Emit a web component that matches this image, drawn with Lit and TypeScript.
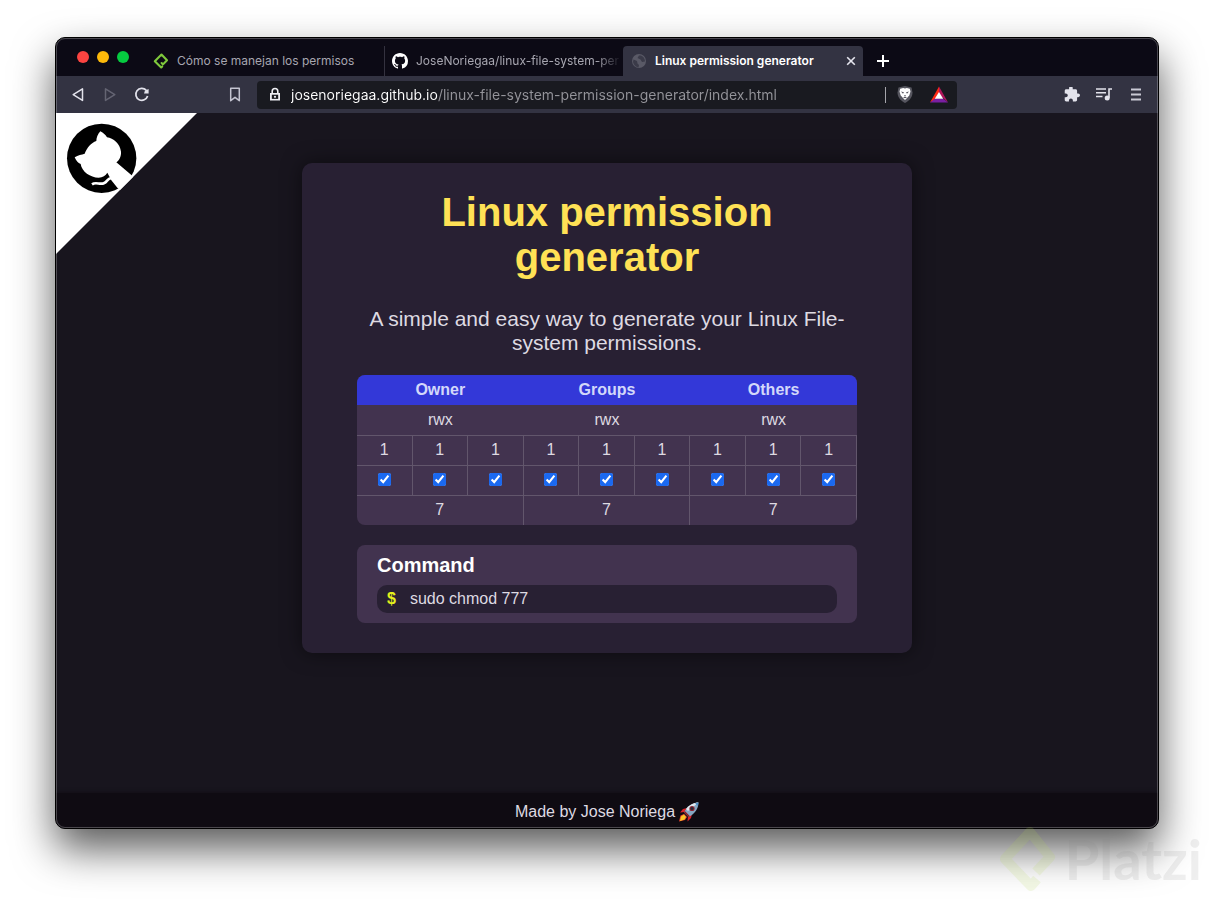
import { LitElement, html, css } from "lit";
import { customElement, state } from "lit/decorators.js";

const GITHUB_MARK =
  "M8 0C3.58 0 0 3.58 0 8c0 3.54 2.29 6.53 5.47 7.59.4.07.55-.17.55-.38 0-.19-.01-.82-.01-1.49-2.01.37-2.53-.49-2.69-.94-.09-.23-.48-.94-.82-1.13-.28-.15-.68-.52-.01-.53.63-.01 1.08.58 1.23.82.72 1.21 1.87.87 2.33.66.07-.52.28-.87.51-1.07-1.78-.2-3.64-.89-3.64-3.95 0-.87.31-1.59.82-2.15-.08-.2-.36-1.02.08-2.12 0 0 .67-.21 2.2.82.64-.18 1.32-.27 2-.27.68 0 1.36.09 2 .27 1.53-1.04 2.2-.82 2.2-.82.44 1.1.16 1.92.08 2.12.51.56.82 1.27.82 2.15 0 3.07-1.87 3.75-3.65 3.95.29.25.54.73.54 1.48 0 1.07-.01 1.93-.01 2.2 0 .21.15.46.55.38A8.012 8.012 0 0 0 16 8c0-4.42-3.58-8-8-8z";

@customElement("permission-page")
export class PermissionPage extends LitElement {
  @state() private bits: boolean[] = Array(9).fill(true);

  static styles = css`
    :host {
      position: relative;
      display: flex;
      flex-direction: column;
      flex: 1;
      background: #18151e;
      color: #dedae2;
      font-family: "Liberation Sans", Arial, sans-serif;
      font-size: 16px;
    }
    .corner {
      position: absolute;
      top: 0;
      left: 0;
      width: 141px;
      height: 141px;
      clip-path: polygon(0 0, 100% 0, 0 100%);
    }
    .corner svg {
      display: block;
      width: 100%;
      height: 100%;
    }
    main {
      flex: 1;
      padding: 50px 20px;
    }
    .card {
      box-sizing: border-box;
      max-width: 610px;
      margin: 0 auto;
      padding: 27px 55px 30px;
      border-radius: 10px;
      background: #282033;
      box-shadow: 0 0 20px rgba(0, 0, 0, 0.5);
    }
    h1 {
      margin: 0 0 27px;
      color: #ffe155;
      font-size: 40px;
      line-height: 45px;
      text-align: center;
    }
    .intro {
      margin: 0 0 20px;
      font-size: 21px;
      line-height: 24px;
      text-align: center;
    }
    table {
      width: 100%;
      table-layout: fixed;
      border-collapse: separate;
      border-spacing: 0;
      border-radius: 8px;
      overflow: hidden;
      background: #42334f;
      text-align: center;
    }
    th,
    td {
      box-sizing: border-box;
      height: 30px;
      padding: 0;
      line-height: 20px;
    }
    thead th {
      background: #3338d8;
      color: #d3d8fa;
    }
    .lined td {
      padding-bottom: 2px;
      border-top: 1px solid #62566c;
      border-right: 1px solid #62566c;
    }
    td input {
      display: block;
      width: 13px;
      height: 13px;
      margin: 0 auto;
      accent-color: #1b69f0;
    }
    .command {
      margin-top: 20px;
      padding: 8px 20px 10px;
      border-radius: 8px;
      background: #42334f;
    }
    h2 {
      margin: 0 0 8px;
      color: #fff;
      font-size: 20px;
      line-height: 24px;
    }
    .shell {
      display: flex;
      gap: 14px;
      padding: 0 10px;
      border-radius: 10px;
      background: #282033;
      line-height: 28px;
    }
    .prompt {
      color: #e4f01c;
      font-weight: bold;
    }
    footer {
      display: flex;
      justify-content: center;
      align-items: center;
      gap: 4px;
      padding-top: 2px;
      height: 33px;
      background: #0f0b12;
      box-shadow: 0 0 4px #0f0b12;
    }
    .rocket {
      width: 20px;
      height: 20px;
    }
  `;

  private toggle(i: number) {
    this.bits = this.bits.map((b, n) => (n === i ? !b : b));
  }

  render() {
    const groups = ["Owner", "Groups", "Others"];
    const digits = groups.map((_, g) =>
      this.bits.slice(g * 3, g * 3 + 3).reduce((sum, b) => sum * 2 + Number(b), 0)
    );
    return html`
      <a class="corner" href="https://github.com/JoseNoriegaa" aria-label="View on GitHub">
        <svg viewBox="0 0 423 423">
          <path d="M0 0H423V423H0Z" fill="#fff" />
          <circle cx="137" cy="136" r="104" />
          <path
            fill="#fff"
            d="M133 55C142 60 149 66 153 73C172 76 192 92 195 116C196 130 190 141 181 148L226 186L260 215L215 250L184 224L166 202L154 179C149 188 140 193 128 194C103 194 77 176 74 153C66 150 60 143 56 133C66 125 77 126 86 122C93 104 105 90 121 84C121 74 125 64 133 55Z"
          />
          <path d="M108 214C121 205 131 217 145 210C155 205 153 197 166 195" fill="none" stroke="#fff" stroke-width="8" />
        </svg>
      </a>
      <main>
        <section class="card">
          <h1>Linux permission generator</h1>
          <p class="intro">A simple and easy way to generate your Linux File-system permissions.</p>
          <table>
            <thead>
              <tr>${groups.map((g) => html`<th colspan="3" scope="colgroup">${g}</th>`)}</tr>
            </thead>
            <tbody>
              <tr>${groups.map(() => html`<td colspan="3">rwx</td>`)}</tr>
              <tr class="lined">${this.bits.map((b) => html`<td>${Number(b)}</td>`)}</tr>
              <tr class="lined">
                ${this.bits.map(
                  (b, i) => html`<td>
                    <input
                      type="checkbox"
                      aria-label="${groups[Math.floor(i / 3)]} ${["read", "write", "execute"][i % 3]}"
                      .checked=${b}
                      @change=${() => this.toggle(i)}
                    />
                  </td>`
                )}
              </tr>
              <tr class="lined">${digits.map((d) => html`<td colspan="3">${d}</td>`)}</tr>
            </tbody>
          </table>
          <div class="command">
            <h2>Command</h2>
            <div class="shell"><span class="prompt">$</span><output>sudo chmod ${digits.join("")}</output></div>
          </div>
        </section>
      </main>
      <footer>
        <span>Made by Jose Noriega</span>
        <svg class="rocket" viewBox="0 0 20 20" role="img" aria-label="rocket">
          <path d="M8 6 4 7 1 10.500l5-.5ZM13 12l-1 4-3.500 3.500.5-5.500Z" fill="#d8232a" />
          <path d="M5 12 1.500 13.500 0 19.500l6-1.500L8 15Z" fill="#e8402a" />
          <path d="M5 12.500 2 14.500 1 19l4.500-1.500L7 15Z" fill="#f9c726" />
          <path d="M19.500.5C14 .5 8 4 5 10.500L9.500 15C16 12 19.500 6 19.500.5Z" fill="#86a6c2" />
          <path d="M19.500.5C15 .5 10 3 7 7l2 2Z" fill="#dfe9f0" />
          <path d="M19.500.5 16 1.200 18.800 4Z" fill="#4a90c8" />
          <path d="M5 10.500 9.500 15 11 14.200 5.800 9Z" fill="#8a1d24" />
          <circle cx="13" cy="6.500" r="2.600" fill="#8c2430" />
          <circle cx="13" cy="6.500" r="1.500" fill="#252d3a" />
        </svg>
      </footer>
    `;
  }
}

@customElement("app-root")
export class AppRoot extends LitElement {
  static styles = css`
    :host {
      position: relative;
      display: flex;
      box-sizing: border-box;
      min-height: 100vh;
      padding: 37px 55px 73px;
      overflow: hidden;
      background: #fff;
      font-family: Inter, Roboto, sans-serif;
    }
    .window {
      position: relative;
      display: flex;
      flex-direction: column;
      flex: 1;
      min-width: 0;
      border: 1px solid #000;
      border-radius: 10px;
      background: #0c0a15;
      box-shadow: 0 20px 42px rgba(0, 0, 0, 0.65);
    }
    .window::after {
      content: "";
      position: absolute;
      inset: 0;
      border: 1px solid rgba(255, 255, 255, 0.25);
      border-radius: 9px;
      pointer-events: none;
    }
    permission-page {
      border-radius: 0 0 9px 9px;
      overflow: hidden;
    }
    button {
      display: flex;
      padding: 0;
      border: 0;
      background: none;
      color: inherit;
      font: inherit;
    }
    svg {
      display: block;
      flex: none;
    }
    .tabs {
      display: flex;
      align-items: flex-end;
      height: 38px;
      padding-left: 21px;
    }
    .lights {
      display: flex;
      flex: none;
      gap: 8px;
      width: 68px;
      height: 25px;
    }
    .light {
      width: 12px;
      height: 12px;
      border-radius: 50%;
    }
    .close { background: #fc4441; }
    .shrink { background: #fdb90a; }
    .grow { background: #06cb40; }
    .tab {
      display: flex;
      align-items: center;
      flex: 0 1 239px;
      gap: 8px;
      box-sizing: border-box;
      min-width: 0;
      height: 30px;
      padding: 0 8px;
      color: #a7a6b0;
      font-size: 12px;
      line-height: 16px;
    }
    .tab + .tab {
      padding: 0 2px 0 7px;
      border-left: 1px solid #34323f;
    }
    .tab .title {
      flex: 1;
      min-width: 0;
      overflow: hidden;
      text-align: left;
      white-space: nowrap;
    }
    .fade {
      -webkit-mask-image: linear-gradient(90deg, #000 88%, transparent);
      mask-image: linear-gradient(90deg, #000 88%, transparent);
    }
    .tab.active {
      flex-basis: 240px;
      padding: 0 6px 0 8px;
      border: 0;
      border-radius: 4px 4px 0 0;
      background: #333342;
      color: #fff;
      font-weight: 600;
    }
    .platzi { color: #7fc93c; }
    .globe { color: #595966; }
    .new {
      padding: 9px 14px;
      color: #fff;
    }
    .toolbar {
      display: grid;
      grid-template-columns: 1fr minmax(0, 700px) 1fr;
      align-items: center;
      height: 37px;
      background: #333342;
      color: #e3e3ec;
    }
    .nav {
      display: flex;
      gap: 16px;
      padding: 0 14px;
    }
    .dim { color: #646472; }
    .mark { margin-left: auto; }
    .address {
      display: flex;
      align-items: center;
      height: 28px;
      padding: 0 9px 0 10px;
      border-radius: 4px;
      background: #191a20;
    }
    .address input {
      flex: 1;
      min-width: 0;
      margin-left: 8px;
      padding: 0;
      border: 0;
      outline: 0;
      background: linear-gradient(90deg, #fff 147px, #94949a 147px);
      -webkit-background-clip: text;
      background-clip: text;
      color: #fff;
      -webkit-text-fill-color: transparent;
      font: 14px/20px Inter, Roboto, sans-serif;
    }
    .rule {
      width: 1px;
      height: 16px;
      margin-right: 10px;
      background: #a5a5ab;
    }
    .shield { margin-right: 16px; }
    .tools {
      justify-content: flex-end;
    }
    .watermark {
      position: absolute;
      right: 12px;
      bottom: 9px;
      display: flex;
      align-items: center;
      gap: 8px;
      color: rgba(130, 130, 130, 0.13);
      font: bold 56px/64px Lato, sans-serif;
      pointer-events: none;
    }
    .watermark svg { color: rgba(184, 215, 90, 0.15); }
  `;

  render() {
    return html`
      <div class="window">
        <div class="tabs">
          <div class="lights">
            <button class="light close" aria-label="Close window"></button>
            <button class="light shrink" aria-label="Minimize window"></button>
            <button class="light grow" aria-label="Zoom window"></button>
          </div>
          <button class="tab">
            <svg class="platzi" width="16" height="16" viewBox="0 0 16 16">
              <path d="M5.500 4.500 8.500 1.500 14 7.200 10 11.400 8.600 10M5.500 4.500 1.800 8.300 8.200 14.500l1-1" fill="none" stroke="currentColor" stroke-width="2.100" stroke-linejoin="round" stroke-linecap="round" />
            </svg>
            <span class="title">Cómo se manejan los permisos</span>
          </button>
          <button class="tab">
            <svg width="16" height="16" viewBox="0 0 16 16"><path d=${GITHUB_MARK} fill="#fff" /></svg>
            <span class="title fade">JoseNoriegaa/linux-file-system-per</span>
          </button>
          <div class="tab active">
            <svg class="globe" width="16" height="16" viewBox="0 0 16 16">
              <circle cx="8" cy="8" r="7" fill="currentColor" />
              <path d="M2.500 6.500 6 8l.5 2.500L8 12l-.5 2.500C4.500 14 2.500 11.500 2 9ZM8 2.500 6.500 5l3 1.500 1.500 2.500 3-.5C14 5.500 12.500 3.500 10 2.500Z" fill="#3b3b49" />
            </svg>
            <span class="title">Linux permission generator</span>
            <button aria-label="Close tab">
              <svg width="12" height="12" viewBox="0 0 12 12"><path d="m2.200 2.200 7.600 7.600m0-7.600L2.200 9.800" stroke="#e6e6ee" stroke-width="1.600" /></svg>
            </button>
          </div>
          <button class="new" aria-label="New tab">
            <svg width="12" height="12" viewBox="0 0 12 12"><path d="M6 0v12M0 6h12" stroke="currentColor" stroke-width="2" /></svg>
          </button>
        </div>
        <div class="toolbar">
          <div class="nav">
            <button aria-label="Back">
              <svg width="16" height="16" viewBox="0 0 16 16"><path d="M12.500 1.800v11.600L3.200 7.600Z" fill="none" stroke="currentColor" stroke-width="1.500" stroke-linejoin="round" /></svg>
            </button>
            <button class="dim" aria-label="Forward">
              <svg width="16" height="16" viewBox="0 0 16 16"><path d="M3.500 1.800v11.600L12.800 7.600Z" fill="none" stroke="currentColor" stroke-width="1.500" stroke-linejoin="round" /></svg>
            </button>
            <button aria-label="Reload">
              <svg width="16" height="16" viewBox="0 0 16 16">
                <path d="M12.200 3.200A6 6 0 1 0 13.600 9" fill="none" stroke="currentColor" stroke-width="1.700" />
                <path d="M14.600 2v4.600h-4.600L11 3.500Z" fill="currentColor" />
              </svg>
            </button>
            <button class="mark" aria-label="Bookmark this page">
              <svg width="16" height="16" viewBox="0 0 16 16"><path d="M3.700 1.300h8.600v12.400L8 10.300l-4.300 3.400Z" fill="none" stroke="#c4c4d0" stroke-width="1.500" stroke-linejoin="round" /></svg>
            </button>
          </div>
          <div class="address">
            <svg width="16" height="16" viewBox="0 0 16 16">
              <path d="M3 6h10v7.500H3Z" fill="#efeff4" />
              <path d="M5.200 6.500V4.300a2.800 2.800 0 0 1 5.600 0v2.200" fill="none" stroke="#efeff4" stroke-width="1.600" />
              <path d="M4.800 7.700h6.400v4.200H4.800Z" fill="#191a20" />
              <circle cx="8" cy="9.800" r="1.100" fill="#efeff4" />
            </svg>
            <input
              type="text"
              aria-label="Address"
              spellcheck="false"
              .value=${"josenoriegaa.github.io/linux-file-system-permission-generator/index.html"}
            />
            <span class="rule"></span>
            <button class="shield" aria-label="Brave Shields">
              <svg width="18" height="18" viewBox="0 0 18 18">
                <path d="M9 0 15.500 1.500l1 5c0 4-2.500 8-7.500 10.500C4 14.500 1.500 10.500 1.500 6.500l1-5Z" fill="#56565f" />
                <path d="m9 2.500 1.800-.5 3 .8.7 2.700-1.200 4L11 12 9 14 7 12 4.700 9.500 3.500 5.500l.7-2.700 3-.8Z" fill="#fff" />
                <path d="m5 5.500 3 .8-1 1.500ZM13 5.500l-3 .8 1 1.500ZM8 9h2l-1 1.200ZM7 11.500l2-1 2 1-2 .8Z" fill="#56565f" />
              </svg>
            </button>
            <button aria-label="Brave Rewards">
              <svg width="18" height="18" viewBox="0 0 18 18">
                <path d="M9 .5 0 16.500l9-5.500Z" fill="#ff2a15" />
                <path d="M9 .5v8l9 8Z" fill="#b0165c" />
                <path d="M0 16.500h18l-5-4H5Z" fill="#7a1fa2" />
                <path d="M9 6 4.800 12.800h8.400Z" fill="#fff" />
              </svg>
            </button>
          </div>
          <div class="nav tools">
            <button aria-label="Extensions">
              <svg width="16" height="16" viewBox="1 2 22 22"><path fill="currentColor" d="M20.500 11H19V7c0-1.100-.9-2-2-2h-4V3.500a2.500 2.500 0 0 0-5 0V5H4c-1.100 0-1.990.9-1.990 2v3.800H3.500c1.490 0 2.700 1.210 2.700 2.700s-1.210 2.700-2.700 2.700H2V20c0 1.100.9 2 2 2h3.800v-1.500c0-1.490 1.210-2.700 2.700-2.700s2.700 1.210 2.700 2.700V22H17c1.100 0 2-.9 2-2v-4h1.500a2.500 2.500 0 0 0 0-5z" /></svg>
            </button>
            <button aria-label="Playlist">
              <svg width="16" height="16" viewBox="0 0 16 16">
                <path d="M0 2h10M0 5.800h10M0 9.500h6.500M13 1.200v9.500M12.200 2H16" fill="none" stroke="currentColor" stroke-width="1.600" />
                <circle cx="11.200" cy="11" r="2.500" fill="currentColor" />
              </svg>
            </button>
            <button aria-label="Menu">
              <svg width="16" height="16" viewBox="0 0 16 16"><path d="M3 2.500h10M3 7.500h10M3 12.500h10" stroke="#c9c9d4" stroke-width="1.800" /></svg>
            </button>
          </div>
        </div>
        <permission-page></permission-page>
      </div>
      <div class="watermark">
        <svg width="58" height="68" viewBox="0 0 58 68">
          <path d="M37 47 51 32 31 7 6 34l26 27 6-7" fill="none" stroke="currentColor" stroke-width="10" stroke-linejoin="round" />
        </svg>
        <span>Platzi</span>
      </div>
    `;
  }
}
